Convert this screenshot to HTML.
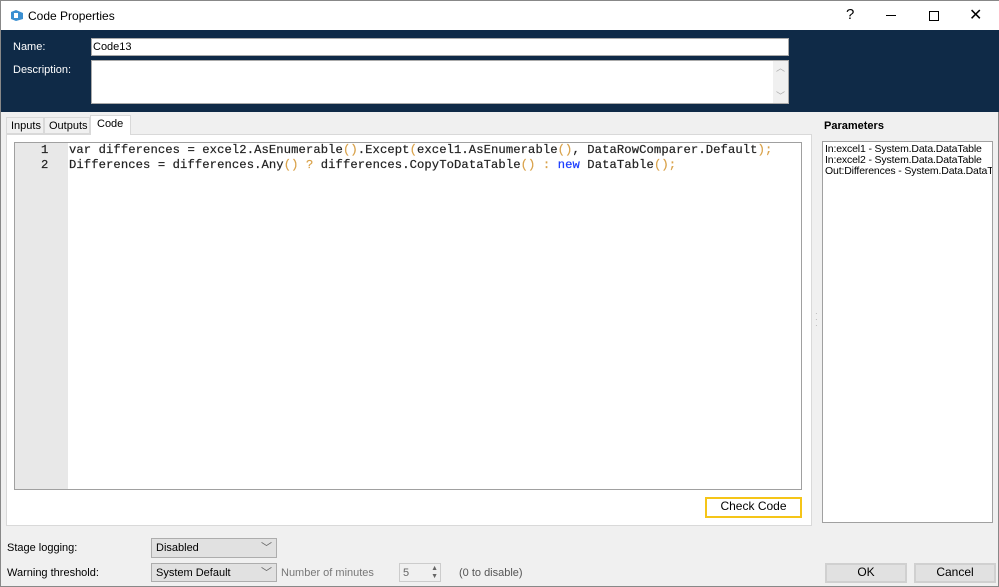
<!DOCTYPE html><html><head><style>
*{box-sizing:border-box;margin:0;padding:0}
body{width:999px;height:587px;background:#f0f0f0;font-family:"Liberation Sans",sans-serif;font-size:11px;color:#000;position:relative;overflow:hidden;border:1px solid #888}
.a{position:absolute}
.code{font-family:"Liberation Mono","Courier New",monospace;font-size:12.2px;letter-spacing:0.09px;color:#222;white-space:pre;line-height:15px;-webkit-text-stroke:0.2px #222}
.p{color:#d9a24a;-webkit-text-stroke:0.2px #d9a24a}.k{color:#1a3cff;-webkit-text-stroke:0.2px #1a3cff}
.cb{background:#e1e1e1;border:1px solid #adadad;padding:3px 4px;font-size:11px;line-height:12px}
.btn{background:#e1e1e1;border:1px solid #adadad;text-align:center;font-size:12px;line-height:15px}
</style></head><body>
<div class="a" style="left:0;top:0;width:999px;height:29px;background:#fff"></div>
<svg class="a" style="left:9px;top:8px" width="14" height="13"><path d="M1 3 L6 1 L13 4 L13 10 L6 12 L1 10Z" fill="#3a8fd1"/><path d="M4 4 L8 4 L8 9 L4 9Z" fill="#fff"/></svg>
<div class="a" style="left:27px;top:8px;font-size:12px">Code Properties</div>
<div class="a" style="left:845px;top:5px;font-size:15px">?</div>
<div class="a" style="left:885px;top:14px;width:10px;height:1px;background:#000"></div>
<div class="a" style="left:928px;top:10px;width:10px;height:10px;border:1px solid #000"></div>
<div class="a" style="left:968px;top:4px;font-size:16px">✕</div>
<div class="a" style="left:0;top:29px;width:999px;height:82px;background:#0f2a47"></div>
<div class="a" style="left:12px;top:40px;color:#fff">Name:</div>
<div class="a" style="left:12px;top:63px;color:#fff">Description:</div>
<div class="a" style="left:90px;top:37px;width:698px;height:18px;background:#fff;border:1px solid #aaa;padding:2px 1px;font-size:11px">Code13</div>
<div class="a" style="left:90px;top:59px;width:698px;height:44px;background:#fff;border:1px solid #aaa"></div>
<div class="a" style="left:772px;top:60px;width:15px;height:42px;background:#f0f0f0;color:#aaa;font-size:9px;text-align:center;line-height:14px">︿<br><br>﹀</div>
<div class="a" style="left:5px;top:116px;width:38px;height:17px;border:1px solid #d9d9d9;background:#f0f0f0;padding:2px 4px">Inputs</div>
<div class="a" style="left:43px;top:116px;width:46px;height:17px;border:1px solid #d9d9d9;background:#f0f0f0;padding:2px 4px">Outputs</div>
<div class="a" style="left:89px;top:114px;width:41px;height:20px;border:1px solid #d9d9d9;border-bottom:none;background:#fff;padding:2px 6px;z-index:2">Code</div>
<div class="a" style="left:5px;top:133px;width:806px;height:392px;border:1px solid #d9d9d9;background:#fff"></div>
<div class="a" style="left:13px;top:141px;width:788px;height:348px;border:1px solid #a0a0a0;background:#fff"></div>
<div class="a" style="left:14px;top:142px;width:53px;height:346px;background:#e8e8e8"></div>
<div class="a code" style="left:40px;top:142px">1
2</div>
<div class="a code" style="left:68px;top:142px">var differences = excel2.AsEnumerable<span class="p">()</span>.Except<span class="p">(</span>excel1.AsEnumerable<span class="p">()</span>, DataRowComparer.Default<span class="p">);</span>
Differences = differences.Any<span class="p">()</span> <span class="p">?</span> differences.CopyToDataTable<span class="p">()</span> <span class="p">:</span> <span class="k">new</span> DataTable<span class="p">();</span></div>
<div class="a btn" style="left:704px;top:496px;width:97px;height:21px;border:2px solid #f5c518;background:#fff">Check Code</div>
<div class="a" style="left:814px;top:310px;color:#aaa;font-size:8px;line-height:6px">·<br>·<br>·</div>
<div class="a" style="left:823px;top:119px;font-weight:bold;font-size:11px">Parameters</div>
<div class="a" style="left:821px;top:140px;width:171px;height:382px;background:#fff;border:1px solid #a0a0a0;padding:2px 2px;font-size:10.5px;line-height:11px;white-space:nowrap;overflow:hidden;letter-spacing:-0.15px">In:excel1 - System.Data.DataTable<br>In:excel2 - System.Data.DataTable<br>Out:Differences - System.Data.DataTable</div>
<div class="a" style="left:6px;top:541px">Stage logging:</div>
<div class="a" style="left:6px;top:566px">Warning threshold:</div>
<div class="a cb" style="left:150px;top:537px;width:126px;height:20px">Disabled<span style="float:right;color:#666">﹀</span></div>
<div class="a cb" style="left:150px;top:562px;width:126px;height:19px">System Default<span style="float:right;color:#666">﹀</span></div>
<div class="a" style="left:280px;top:566px;color:#777">Number of minutes</div>
<div class="a" style="left:398px;top:562px;width:42px;height:19px;border:1px solid #ccc;background:#f0f0f0;padding:3px 3px;color:#666">5<span style="position:absolute;right:2px;top:1px;font-size:7px;line-height:8px;color:#666">▲<br>▼</span></div>
<div class="a" style="left:458px;top:566px;color:#555">(0 to disable)</div>
<div class="a btn" style="left:824px;top:562px;width:82px;height:20px;border:2px solid #d0d0d0">OK</div>
<div class="a btn" style="left:913px;top:562px;width:82px;height:20px;border:2px solid #d0d0d0">Cancel</div>
</body></html>
